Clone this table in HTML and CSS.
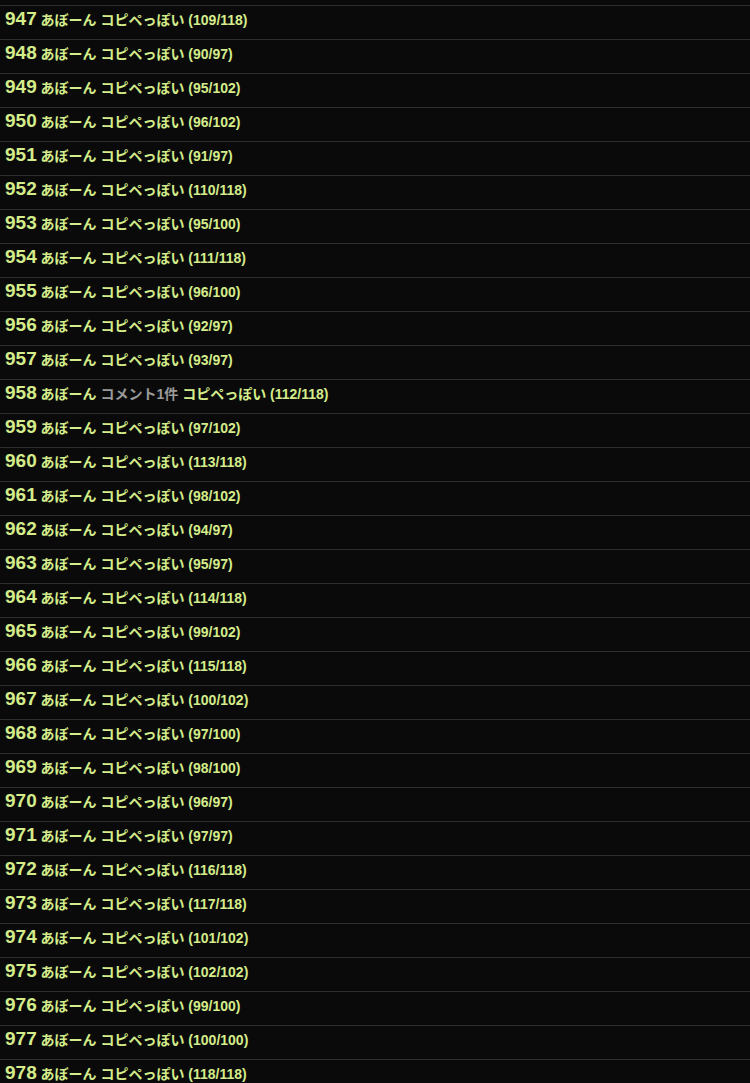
FILE: index.html
```html
<!DOCTYPE html>
<html lang="ja">
<head>
    <meta charset="UTF-8">
    <meta name="viewport" content="width=device-width, initial-scale=1.0">
    <title>あぼーん一覧</title>
    <link rel="stylesheet" href="styles.css">
</head>
<body>
    <div class="res-list">
        <div class="res"><span class="num">947</span> <span class="abone">あぼーん コピペっぽい (109/118)</span></div>
        <div class="res"><span class="num">948</span> <span class="abone">あぼーん コピペっぽい (90/97)</span></div>
        <div class="res"><span class="num">949</span> <span class="abone">あぼーん コピペっぽい (95/102)</span></div>
        <div class="res"><span class="num">950</span> <span class="abone">あぼーん コピペっぽい (96/102)</span></div>
        <div class="res"><span class="num">951</span> <span class="abone">あぼーん コピペっぽい (91/97)</span></div>
        <div class="res"><span class="num">952</span> <span class="abone">あぼーん コピペっぽい (110/118)</span></div>
        <div class="res"><span class="num">953</span> <span class="abone">あぼーん コピペっぽい (95/100)</span></div>
        <div class="res"><span class="num">954</span> <span class="abone">あぼーん コピペっぽい (111/118)</span></div>
        <div class="res"><span class="num">955</span> <span class="abone">あぼーん コピペっぽい (96/100)</span></div>
        <div class="res"><span class="num">956</span> <span class="abone">あぼーん コピペっぽい (92/97)</span></div>
        <div class="res"><span class="num">957</span> <span class="abone">あぼーん コピペっぽい (93/97)</span></div>
        <div class="res"><span class="num">958</span> <span class="abone">あぼーん <span class="comment">コメント1件</span> コピペっぽい (112/118)</span></div>
        <div class="res"><span class="num">959</span> <span class="abone">あぼーん コピペっぽい (97/102)</span></div>
        <div class="res"><span class="num">960</span> <span class="abone">あぼーん コピペっぽい (113/118)</span></div>
        <div class="res"><span class="num">961</span> <span class="abone">あぼーん コピペっぽい (98/102)</span></div>
        <div class="res"><span class="num">962</span> <span class="abone">あぼーん コピペっぽい (94/97)</span></div>
        <div class="res"><span class="num">963</span> <span class="abone">あぼーん コピペっぽい (95/97)</span></div>
        <div class="res"><span class="num">964</span> <span class="abone">あぼーん コピペっぽい (114/118)</span></div>
        <div class="res"><span class="num">965</span> <span class="abone">あぼーん コピペっぽい (99/102)</span></div>
        <div class="res"><span class="num">966</span> <span class="abone">あぼーん コピペっぽい (115/118)</span></div>
        <div class="res"><span class="num">967</span> <span class="abone">あぼーん コピペっぽい (100/102)</span></div>
        <div class="res"><span class="num">968</span> <span class="abone">あぼーん コピペっぽい (97/100)</span></div>
        <div class="res"><span class="num">969</span> <span class="abone">あぼーん コピペっぽい (98/100)</span></div>
        <div class="res"><span class="num">970</span> <span class="abone">あぼーん コピペっぽい (96/97)</span></div>
        <div class="res"><span class="num">971</span> <span class="abone">あぼーん コピペっぽい (97/97)</span></div>
        <div class="res"><span class="num">972</span> <span class="abone">あぼーん コピペっぽい (116/118)</span></div>
        <div class="res"><span class="num">973</span> <span class="abone">あぼーん コピペっぽい (117/118)</span></div>
        <div class="res"><span class="num">974</span> <span class="abone">あぼーん コピペっぽい (101/102)</span></div>
        <div class="res"><span class="num">975</span> <span class="abone">あぼーん コピペっぽい (102/102)</span></div>
        <div class="res"><span class="num">976</span> <span class="abone">あぼーん コピペっぽい (99/100)</span></div>
        <div class="res"><span class="num">977</span> <span class="abone">あぼーん コピペっぽい (100/100)</span></div>
        <div class="res"><span class="num">978</span> <span class="abone">あぼーん コピペっぽい (118/118)</span></div>
    </div>
</body>
</html>
```

FILE: styles.css
```css
body {
    margin: 0;
    padding: 0;
    background-color: #0a0a0a;
    color: #d4ec8a;
    font-family: "Liberation Sans", "Noto Sans CJK JP", sans-serif;
    overflow: hidden;
}
.res-list {
    padding-top: 5px;
}
.res {
    height: 33px;
    padding-left: 5px;
    border-top: 1px solid #2e2e2e;
    font-size: 14px;
    line-height: 25px;
    white-space: nowrap;
}
.num {
    font-size: 19px;
    font-weight: bold;
    color: #d4ec8a;
}
.abone {
    font-weight: bold;
    color: #d4ec8a;
}
.comment {
    color: #9a9a9a;
}
```
